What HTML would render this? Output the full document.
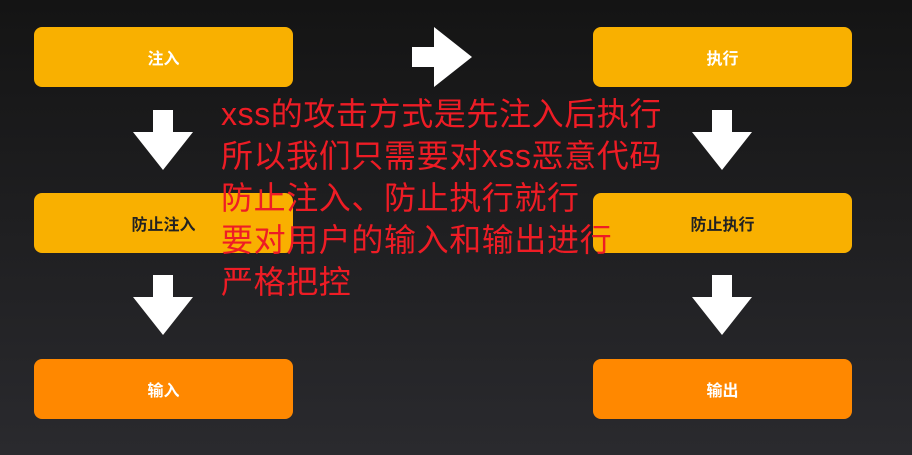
<!DOCTYPE html>
<html><head><meta charset="utf-8"><style>
html,body{margin:0;padding:0}
body{width:912px;height:455px;position:relative;overflow:hidden;background:linear-gradient(#141414,#2a2a2e);font-family:"Liberation Sans","Noto Sans CJK SC",sans-serif}
.b{position:absolute;width:259px;height:60px;border-radius:8px;display:flex;align-items:center;justify-content:center;font-size:16px;font-weight:bold}
.y{background:#f9b000}.o{background:#ff8800;color:#fff}
.w{color:#fff}.k{color:#222}
svg{position:absolute}
.t{position:absolute;left:221px;top:93px;color:#ee1c25;font-size:32px;letter-spacing:0.6px;line-height:42px;white-space:nowrap;font-family:"Liberation Sans","Noto Sans CJK SC",sans-serif}
</style></head><body>
<div class="b y w" style="left:34px;top:27px">注入</div>
<div class="b y w" style="left:593px;top:27px">执行</div>
<div class="b y k" style="left:34px;top:193px">防止注入</div>
<div class="b y k" style="left:593px;top:193px">防止执行</div>
<div class="b o" style="left:34px;top:359px">输入</div>
<div class="b o" style="left:593px;top:359px">输出</div>
<svg width="912" height="455" style="left:0;top:0">
<g fill="#fff">
<polygon points="153,110 173,110 173,132 193,132 163,170 133,132 153,132"/>
<polygon points="153,275 173,275 173,297 193,297 163,335 133,297 153,297"/>
<polygon points="712,110 732,110 732,132 752,132 722,170 692,132 712,132"/>
<polygon points="712,275 732,275 732,297 752,297 722,335 692,297 712,297"/>
<polygon points="412,47 434,47 434,27 472,57 434,87 434,67 412,67"/>
</g></svg>
<div class="t">xss的攻击方式是先注入后执行<br>所以我们只需要对xss恶意代码<br>防止注入、防止执行就行<br>要对用户的输入和输出进行<br>严格把控</div>
</body></html>
